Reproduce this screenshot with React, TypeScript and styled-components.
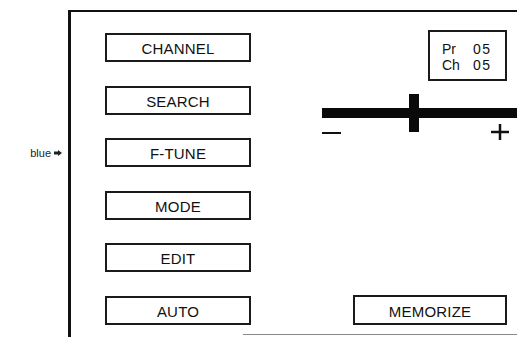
import React from "react";
import styled, { createGlobalStyle } from "styled-components";

const GlobalStyle = createGlobalStyle`
  body {
    margin: 0;
    background: #fff;
    font-family: "Liberation Sans", Arial, sans-serif;
    color: #111;
  }
`;

const buttons = ["CHANNEL", "SEARCH", "F-TUNE", "MODE", "EDIT", "AUTO"];

export default function App() {
  return (
    <Page>
      <GlobalStyle />
      <Side>
        <Label>
          blue
          <svg width="8" height="6" viewBox="0 0 8 6">
            <rect x="0" y="1.5" width="4" height="3" fill="#222" />
            <polygon points="4,0 8,3 4,6" fill="#222" />
          </svg>
        </Label>
      </Side>
      <Frame>
        <ButtonColumn>
          {buttons.map((b) => (
            <Key key={b}>{b}</Key>
          ))}
        </ButtonColumn>
        <Panel>
          <ChannelBox>
            <span>Pr</span>
            <Num>05</Num>
            <span>Ch</span>
            <Num>05</Num>
          </ChannelBox>
          <Slider width="195" height="48" viewBox="0 0 195 48">
            <rect x="0" y="14" width="195" height="10" fill="#0a0a0a" />
            <rect x="87" y="0" width="10" height="38" fill="#0a0a0a" />
            <line x1="0" y1="39" x2="19" y2="39" stroke="#111" strokeWidth="2" />
            <line x1="169" y1="38" x2="187" y2="38" stroke="#111" strokeWidth="2.5" />
            <line x1="178" y1="30" x2="178" y2="46" stroke="#111" strokeWidth="2.5" />
          </Slider>
          <Memorize>MEMORIZE</Memorize>
        </Panel>
      </Frame>
    </Page>
  );
}

const Page = styled.div`
  display: flex;
  width: 517px;
  height: 337px;
  overflow: hidden;
  background: #fff;
`;

const Side = styled.div`
  width: 68px;
  flex-shrink: 0;
  box-sizing: border-box;
  padding-top: 147px;
  padding-right: 6px;
  display: flex;
  justify-content: flex-end;
  align-items: flex-start;
`;

const Label = styled.div`
  display: flex;
  align-items: center;
  gap: 3px;
  font-size: 11px;
  line-height: 12px;
  color: #222;
`;

const Frame = styled.div`
  flex: 1;
  box-sizing: border-box;
  margin-top: 10px;
  border-top: 2px solid #111;
  border-left: 3px solid #111;
  padding: 18px 10px 12px 34px;
  display: flex;
  background: linear-gradient(#8a8a8a, #8a8a8a) no-repeat;
  background-size: 100% 1px;
  background-position: 172px calc(100% - 2px);
`;

const ButtonColumn = styled.div`
  display: flex;
  flex-direction: column;
  gap: 23.6px;
  padding-top: 3px;
  width: 146px;
  flex-shrink: 0;
`;

const Key = styled.div`
  box-sizing: border-box;
  height: 29px;
  border: 2px solid #1a1a1a;
  display: flex;
  align-items: center;
  justify-content: center;
  padding-top: 2px;
  font-size: 15px;
  letter-spacing: 0.2px;
  color: #111;
`;

const Panel = styled.div`
  flex: 1;
  display: flex;
  flex-direction: column;
  align-items: flex-end;
`;

const ChannelBox = styled.div`
  box-sizing: border-box;
  width: 79px;
  height: 51px;
  border: 2px solid #1a1a1a;
  padding: 9px 0 0 12px;
  display: grid;
  grid-template-columns: 31px auto;
  grid-auto-rows: 16px;
  font-size: 14px;
  line-height: 16px;
`;

const Num = styled.span`
  letter-spacing: 1.5px;
`;

const Slider = styled.svg`
  display: block;
  margin-top: 13px;
  margin-right: -10px;
`;

const Memorize = styled.div`
  box-sizing: border-box;
  margin-top: auto;
  width: 154px;
  height: 30px;
  border: 2px solid #1a1a1a;
  display: flex;
  align-items: center;
  justify-content: center;
  padding-top: 2px;
  font-size: 15px;
  letter-spacing: 0.2px;
`;
